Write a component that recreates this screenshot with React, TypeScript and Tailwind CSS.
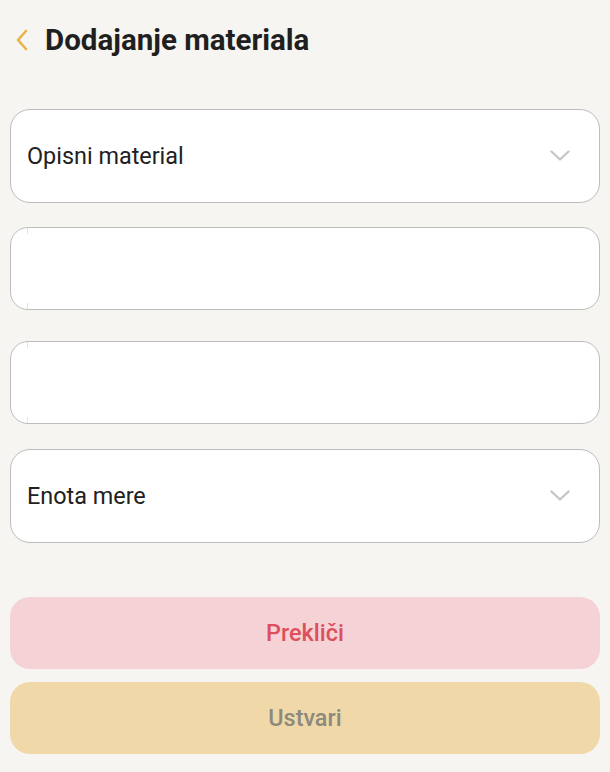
import React from "react";

const Chevron = () => (
  <svg width="20" height="12" viewBox="0 0 20 12" fill="none">
    <path d="M1.5 1.5 L10 9.5 L18.5 1.5" stroke="#c6c6c6" strokeWidth="2.4" strokeLinecap="round" strokeLinejoin="round" />
  </svg>
);

const SelectBox = ({ label }: { label: string }) => (
  <div className="flex h-[94px] items-center justify-between rounded-[20px] border border-[#bdbdbd] bg-white pl-[16px] pr-[29px]">
    <span className="pt-[2px] text-[23.4px] text-[#212121]">{label}</span>
    <Chevron />
  </div>
);

const InputBox = () => (
  <div className="relative h-[83px] rounded-[18px] border border-[#bdbdbd] bg-white">
    <span className="absolute left-[16px] top-0 h-[6px] w-px bg-[#e4e4e4]" />
    <span className="absolute bottom-0 left-[16px] h-[6px] w-px bg-[#e4e4e4]" />
  </div>
);

export default function App() {
  return (
    <div className="min-h-[772px] w-[610px] bg-[#f6f5f1] px-[10px]" style={{ fontFamily: "Roboto, 'Liberation Sans', sans-serif" }}>
      <div className="flex h-[80px] items-center gap-[16px] pl-[5px]">
        <svg width="14" height="22" viewBox="0 0 14 22" fill="none">
          <path d="M11 2 L3 11 L11 20" stroke="#eab348" strokeWidth="2.6" strokeLinecap="round" strokeLinejoin="round" />
        </svg>
        <h1 className="text-[29.5px] font-bold text-[#1f1f1f]">Dodajanje materiala</h1>
      </div>
      <div className="mt-[29px] flex flex-col">
        <SelectBox label="Opisni material" />
        <div className="mt-[24px]">
          <InputBox />
        </div>
        <div className="mt-[31px]">
          <InputBox />
        </div>
        <div className="mt-[25px]">
          <SelectBox label="Enota mere" />
        </div>
        <button className="mt-[54px] flex h-[72px] items-center justify-center rounded-[20px] bg-[#f5d2d6] pt-[2px] text-[23.4px] font-medium text-[#de4f5c]">
          Prekliči
        </button>
        <button className="mt-[13px] flex h-[72px] items-center justify-center rounded-[20px] bg-[#f1d8a8] pt-[2px] text-[23.4px] font-medium text-[#8c8a7c]">
          Ustvari
        </button>
      </div>
    </div>
  );
}
